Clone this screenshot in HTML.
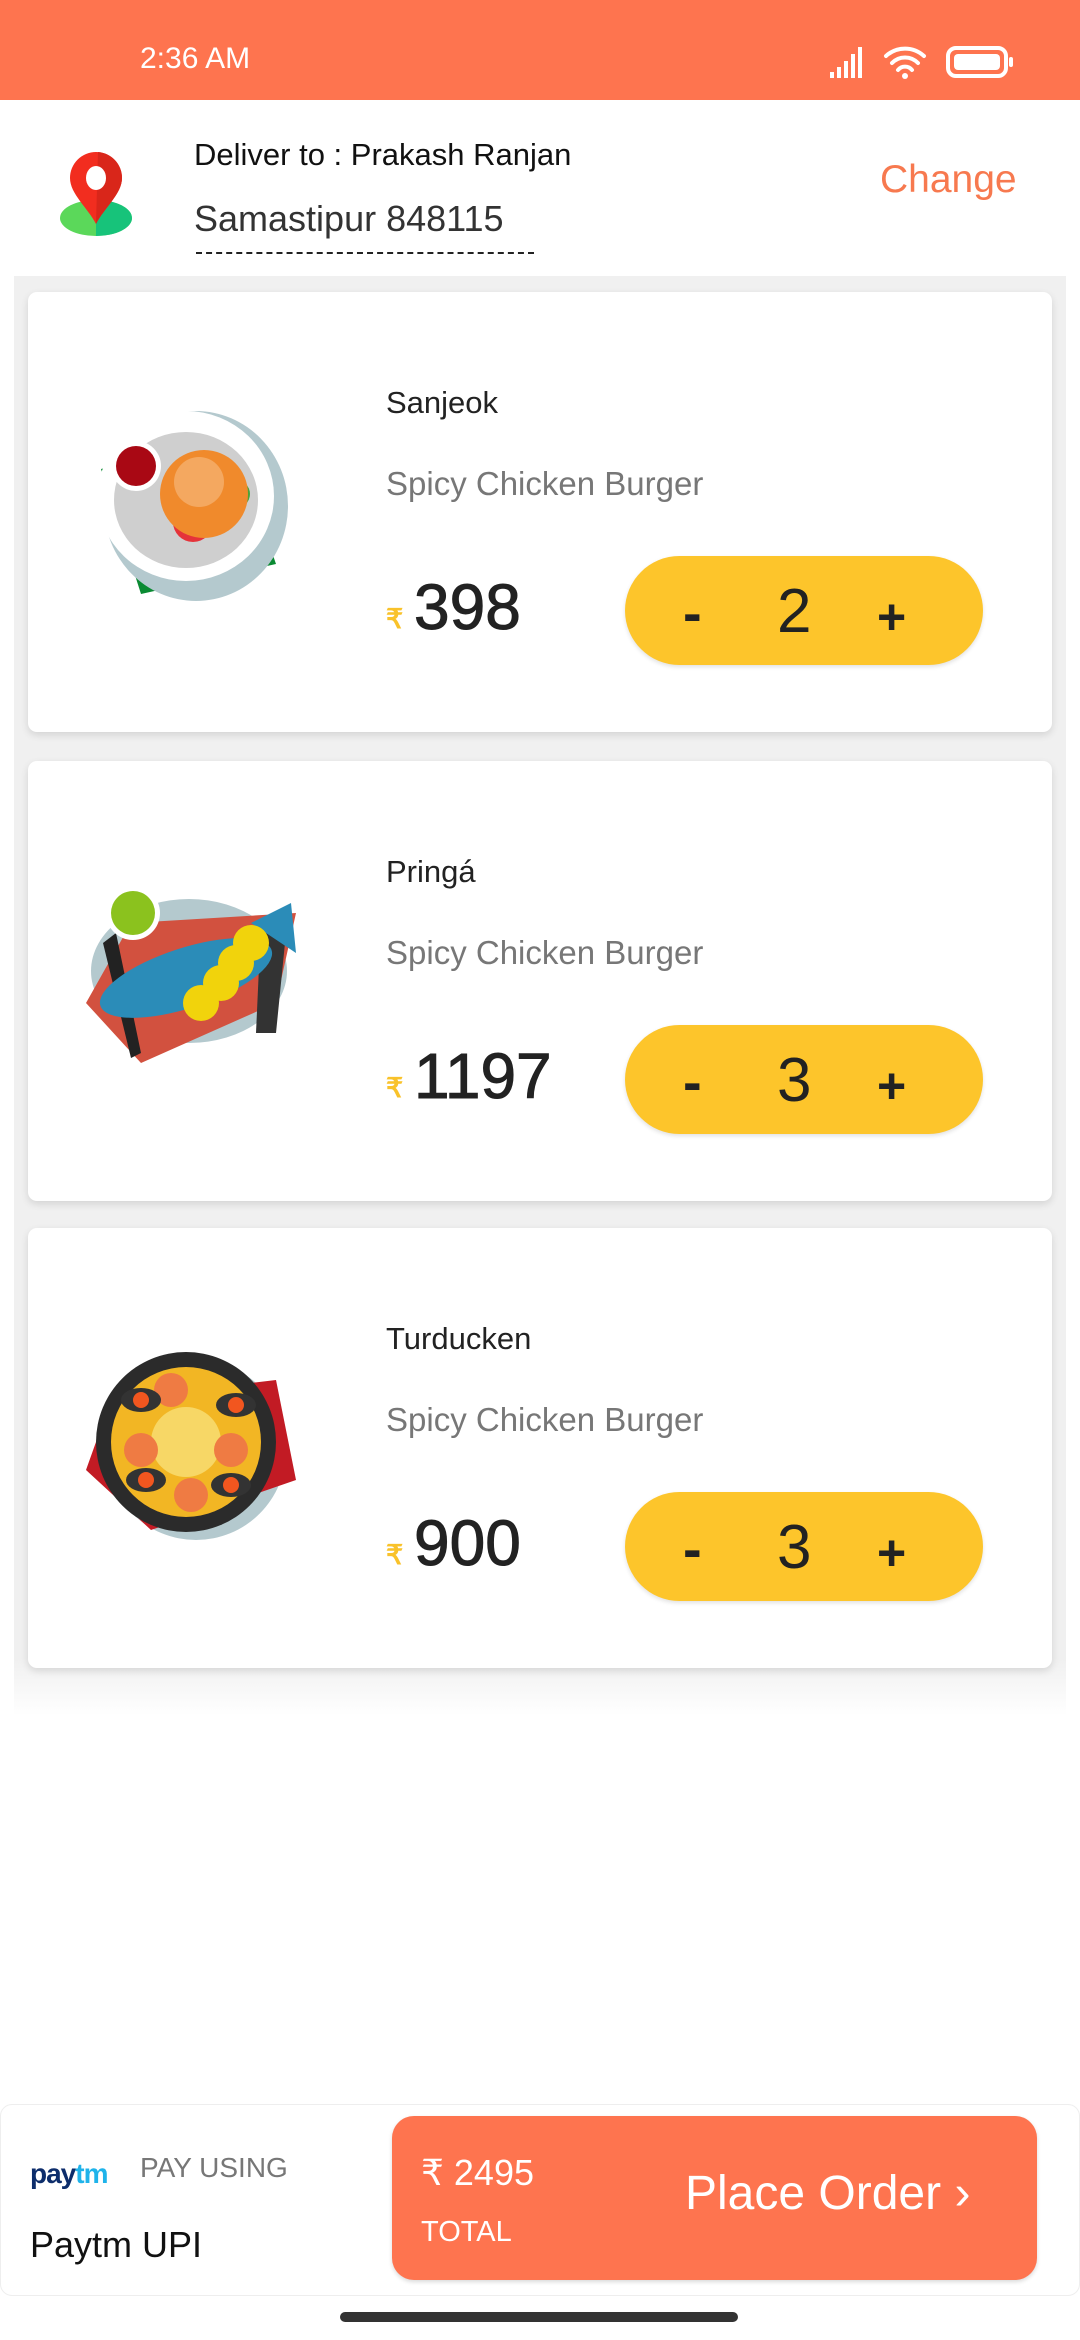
<!DOCTYPE html>
<html><head><meta charset="utf-8">
<style>
*{margin:0;padding:0;box-sizing:border-box}
body{width:1080px;height:2340px;background:#fff;font-family:"Liberation Sans",sans-serif;position:relative;overflow:hidden}
.abs{position:absolute}
.status{left:0;top:0;width:1080px;height:100px;background:#fe744f}
.bg{left:14px;top:276px;width:1052px;height:1440px;background:linear-gradient(#f0f0f0,#f0f0f0 96%,#fff);}
.card{left:28px;width:1024px;height:440px;background:#fff;border-radius:9px;box-shadow:0 3px 8px rgba(0,0,0,.12)}
.name{left:358px;top:93px;font-size:31px;color:#222;white-space:nowrap}
.desc{left:358px;top:173px;font-size:33px;color:#777;white-space:nowrap}
.rs{left:358px;top:312px;font-size:27px;color:#f9c22a;font-weight:bold}
.price{left:386px;top:278px;font-size:64px;color:#222;white-space:nowrap;-webkit-text-stroke:1px #222}
.pill{left:597px;top:264px;width:358px;height:109px;border-radius:55px;background:#fdc52b;box-shadow:0 2px 4px rgba(0,0,0,.12)}
.pill span{position:absolute;color:#222}
.food{left:43px;top:102px}
</style></head><body>
<div class="abs status"></div>
<div class="abs" style="left:140px;top:42px;font-size:30px;color:#fff">2:36 AM</div>
<svg class="abs" style="left:828px;top:44px" width="190" height="36" viewBox="0 0 190 36">
<g fill="#fff"><rect x="2" y="28" width="4" height="6"/><rect x="9" y="23" width="4" height="11"/><rect x="16" y="17" width="4" height="17"/><rect x="23" y="10" width="4" height="24"/><rect x="30" y="3" width="4" height="31"/></g>
<g fill="none" stroke="#fff" stroke-width="4" stroke-linecap="round"><path d="M58 12a28 28 0 0 1 38 0"/><path d="M64 19a18 18 0 0 1 26 0"/><path d="M70 26a9 9 0 0 1 14 0"/></g>
<circle cx="77" cy="32" r="3" fill="#fff"/>
<rect x="120" y="4" width="58" height="28" rx="8" fill="none" stroke="#fff" stroke-width="4"/>
<rect x="126" y="10" width="46" height="16" rx="4" fill="#fff"/>
<rect x="181" y="13" width="4" height="10" rx="2" fill="#fff"/>
</svg>

<svg class="abs" style="left:58px;top:152px" width="80" height="86" viewBox="0 0 80 86">
<ellipse cx="38" cy="66" rx="36" ry="18" fill="#5bd85a"/>
<path d="M38 66 L38 84 A36 18 0 0 0 74 66 A36 18 0 0 0 50 49Z" fill="#17c37a"/>
<path d="M38 72 C30 56 12 42 12 26 A26 26 0 0 1 64 26 C64 42 46 56 38 72Z" fill="#f22d1f"/>
<path d="M38 72 C46 56 64 42 64 26 A26 26 0 0 0 40 0Z" fill="#d9261a"/>
<ellipse cx="38" cy="26" rx="10" ry="12" fill="#fff"/>
</svg>
<div class="abs" style="left:194px;top:137px;font-size:31px;color:#111">Deliver to : Prakash Ranjan</div>
<div class="abs" style="left:194px;top:198px;font-size:36px;color:#333">Samastipur 848115</div>
<div class="abs" style="left:196px;top:252px;width:338px;border-top:2px dashed #222"></div>
<div class="abs" style="left:880px;top:158px;font-size:39px;color:#f7794f">Change</div>

<div class="abs bg"></div>

<!-- card 1 -->
<div class="abs card" style="top:292px">
<svg class="abs food" width="240" height="220" viewBox="0 0 240 220">
<path d="M30 75 L160 40 L205 170 L70 200Z" fill="#0a8a32"/>
<ellipse cx="125" cy="112" rx="92" ry="95" fill="#b4c9ce"/>
<ellipse cx="115" cy="102" rx="88" ry="85" fill="#fff"/>
<ellipse cx="115" cy="106" rx="72" ry="68" fill="#cfcfcf"/>
<circle cx="65" cy="72" r="25" fill="#fff"/><circle cx="65" cy="72" r="20" fill="#a90814"/>
<circle cx="140" cy="75" r="15" fill="#e5333a"/><circle cx="165" cy="100" r="14" fill="#4aa23a"/>
<circle cx="122" cy="128" r="20" fill="#e5333a"/>
<circle cx="133" cy="100" r="44" fill="#f08a2c"/><circle cx="128" cy="88" r="25" fill="#f4a860"/>
</svg>
<div class="abs name">Sanjeok</div>
<div class="abs desc">Spicy Chicken Burger</div>
<div class="abs rs">₹</div><div class="abs price">398</div>
<div class="abs pill"><span style="left:58px;top:24px;font-size:56px;font-weight:bold">-</span><span style="left:152px;top:20px;font-size:62px">2</span><span style="left:252px;top:32px;font-size:50px;font-weight:bold">+</span></div>
</div>

<!-- card 2 -->
<div class="abs card" style="top:761px">
<svg class="abs food" width="240" height="220" viewBox="0 0 240 220">
<ellipse cx="118" cy="108" rx="98" ry="72" fill="#b4c9ce"/>
<path d="M15 140 L60 60 L225 50 L205 140 L70 200Z" fill="#d2513f"/>
<path d="M45 70 L70 190 L60 195 L32 80Z" fill="#222"/>
<path d="M190 60 L215 70 L205 170 L185 170Z" fill="#333"/>
<ellipse cx="115" cy="115" rx="90" ry="30" transform="rotate(-18 115 115)" fill="#2b8cb8"/>
<path d="M180 60 L220 40 L225 90Z" fill="#2b8cb8"/>
<circle cx="62" cy="50" r="27" fill="#fff"/><circle cx="62" cy="50" r="22" fill="#8bc21e"/>
<circle cx="165" cy="100" r="18" fill="#f1d30c"/><circle cx="150" cy="120" r="18" fill="#f1d30c"/><circle cx="130" cy="140" r="18" fill="#f1d30c"/><circle cx="180" cy="80" r="18" fill="#f1d30c"/>
</svg>
<div class="abs name">Pringá</div>
<div class="abs desc">Spicy Chicken Burger</div>
<div class="abs rs">₹</div><div class="abs price">1197</div>
<div class="abs pill"><span style="left:58px;top:24px;font-size:56px;font-weight:bold">-</span><span style="left:152px;top:20px;font-size:62px">3</span><span style="left:252px;top:32px;font-size:50px;font-weight:bold">+</span></div>
</div>

<!-- card 3 -->
<div class="abs card" style="top:1228px">
<svg class="abs food" width="240" height="220" viewBox="0 0 240 220">
<ellipse cx="125" cy="120" rx="90" ry="90" fill="#b4c9ce"/>
<path d="M15 140 L40 70 L205 50 L225 150 L80 200Z" fill="#c21b24"/>
<circle cx="115" cy="112" r="90" fill="#2b2b2b"/>
<circle cx="115" cy="112" r="75" fill="#f2b624"/>
<circle cx="115" cy="112" r="35" fill="#f7d766"/>
<g fill="#ef7b43"><circle cx="100" cy="60" r="17"/><circle cx="160" cy="120" r="17"/><circle cx="70" cy="120" r="17"/><circle cx="120" cy="165" r="17"/></g>
<g fill="#333"><ellipse cx="70" cy="70" rx="20" ry="12"/><ellipse cx="165" cy="75" rx="20" ry="12"/><ellipse cx="75" cy="150" rx="20" ry="12"/><ellipse cx="160" cy="155" rx="20" ry="12"/></g>
<g fill="#f2561f"><circle cx="70" cy="70" r="8"/><circle cx="165" cy="75" r="8"/><circle cx="75" cy="150" r="8"/><circle cx="160" cy="155" r="8"/></g>
</svg>
<div class="abs name">Turducken</div>
<div class="abs desc">Spicy Chicken Burger</div>
<div class="abs rs">₹</div><div class="abs price">900</div>
<div class="abs pill"><span style="left:58px;top:24px;font-size:56px;font-weight:bold">-</span><span style="left:152px;top:20px;font-size:62px">3</span><span style="left:252px;top:32px;font-size:50px;font-weight:bold">+</span></div>
</div>

<!-- bottom bar -->
<div class="abs" style="left:0;top:2104px;width:1080px;height:192px;background:#fff;border:1px solid #eee;border-radius:12px"></div>
<div class="abs" style="left:30px;top:2158px;font-size:28px;font-weight:bold;letter-spacing:-1px"><span style="color:#0d2d6b">pay</span><span style="color:#1fb3ea">tm</span></div>
<div class="abs" style="left:140px;top:2152px;font-size:28px;color:#777">PAY USING</div>
<div class="abs" style="left:30px;top:2224px;font-size:36px;color:#111">Paytm UPI</div>
<div class="abs" style="left:392px;top:2116px;width:645px;height:164px;background:#fe744f;border-radius:22px;box-shadow:0 2px 4px rgba(0,0,0,.15)"></div>
<div class="abs" style="left:421px;top:2152px;font-size:36px;color:#fff">₹ 2495</div>
<div class="abs" style="left:421px;top:2216px;font-size:29px;color:#fff">TOTAL</div>
<div class="abs" style="left:685px;top:2166px;font-size:48px;color:#fff;white-space:nowrap">Place Order ›</div>
<div class="abs" style="left:340px;top:2312px;width:398px;height:10px;background:#333;border-radius:5px"></div>
</body></html>
